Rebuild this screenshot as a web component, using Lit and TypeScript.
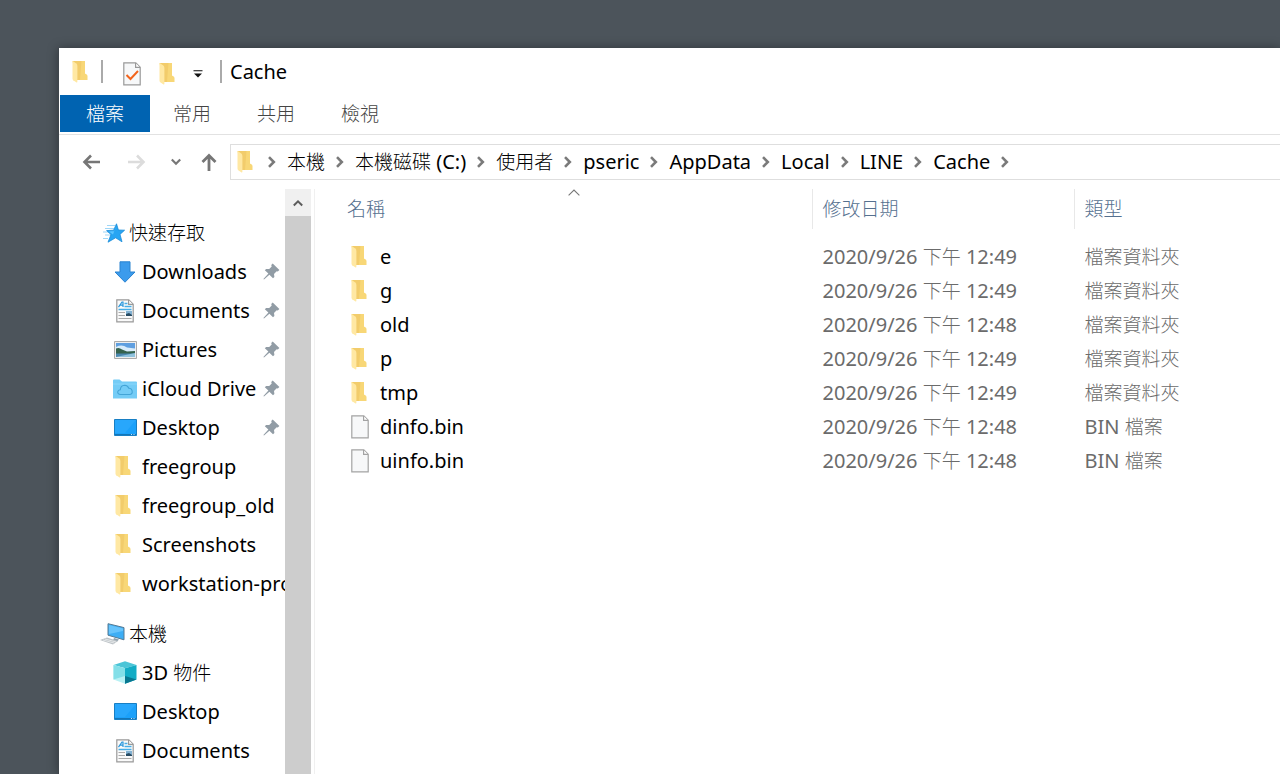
import { LitElement, html, svg, css, nothing, TemplateResult } from "lit";
import { customElement, property } from "lit/decorators.js";

type IconName =
  | "folder" | "file" | "check" | "star" | "download" | "document" | "picture"
  | "icloud" | "desktop" | "computer" | "cube" | "pin" | "back" | "forward"
  | "down" | "up" | "chevron" | "caret" | "scroll" | "sort";

interface Glyph { w: number; h: number; art: TemplateResult; }

const GLYPHS: Record<IconName, Glyph> = {
  folder: { w: 16, h: 22, art: svg`
    <path d="M.5 0H13V12Q13 12.8 13.8 13Q15.5 13.5 15.5 15V19H4Z" fill="#f8d777"/>
    <path d="M1 0L5 3V19H8L9.5 0Z" fill="#f2cc6b"/>
    <path d="M.5 0L4.2 2.6Q5.4 3.6 5.4 5V20.6Q5.4 22 4.2 21.2L1.2 19.2Q.5 18.6 .5 17.6Z" fill="#ffe8a3"/>` },
  file: { w: 18, h: 24, art: svg`
    <path d="M.8 .8H12.8L17.2 5.2V22.8H.8Z" fill="#f7f8f9" stroke="#a3a3a3" stroke-width="1.2"/>
    <path d="M12.6 1V5.4H17" fill="#fff" stroke="#a3a3a3" stroke-width="1.2"/>` },
  check: { w: 18, h: 24, art: svg`
    <path d="M.8 .8H12.8L17.2 5.2V22.8H.8Z" fill="#f7f8f9" stroke="#999" stroke-width="1.2"/>
    <path d="M12.6 1V5.4H17" fill="#fff" stroke="#999" stroke-width="1.2"/>
    <path d="M3.5 13L7.5 17L15 9" fill="none" stroke="#f2641c" stroke-width="2"/>` },
  star: { w: 22, h: 20, art: svg`
    <path d="M4 2.5H12M2 5.5H11M0 9H6M2 12H8M0 15.5H5" stroke="#9ed6f7" stroke-width="1.1"/>
    <path d="M13.5 .8L15.4 7L21.6 7.2L17 11.4L19 18.8L12.6 14.8L5 19.2L8 11.6L3.6 7.6L10.6 7.2Z" fill="#27a5f3" stroke="#1b8bd8" stroke-width=".8"/>
    <path d="M13.4 2.5L11.5 8L6 8.4L10 11.5Z" fill="#5cc4ff"/>` },
  download: { w: 22, h: 22, art: svg`
    <path d="M6 .8H16V11H21L11 21.2L1 11H6Z" fill="#3b9bec" stroke="#2b83d0"/>` },
  document: { w: 18, h: 24, art: svg`
    <path d="M.8 .8H12.8L17.2 5.2V22.8H.8Z" fill="#fafafa" stroke="#999" stroke-width="1.2"/>
    <path d="M12.6 1V5.4H17" fill="#fff" stroke="#999" stroke-width="1.2"/>
    <path d="M2.5 8.2L6 3H7V8M4.2 6.2H7" fill="none" stroke="#2795db" stroke-width="1.2"/>
    <path d="M8.5 4.5H11.5M8.5 7.5H15.5M2.5 10.5H15.5" stroke="#45aee8" stroke-width="1.3"/>
    <path d="M2.5 13.5H9M2.5 16.5H9M2.5 19.5H15.5" stroke="#aaa" stroke-width="1.2"/>
    <path d="M10 12H16V17H10Z" fill="#82b1d2"/><path d="M10 17V15L13 14L16 16V17Z" fill="#274b63"/>` },
  picture: { w: 23, h: 18, art: svg`
    <path d="M.5 .5H22.5V17.5H.5Z" fill="#eee" stroke="#aaa"/>
    <path d="M2 2H21V16H2Z" fill="#5f9fe0"/>
    <path d="M2 6Q8 3 13 6.5L21 7.5V11H2Z" fill="#d8ecfb"/>
    <path d="M2 7.5Q5 6 8 8.5L13 10.5L21 10V13H2Z" fill="#35624d"/>
    <path d="M2 12.5H21V16H2Z" fill="#4b87ae"/><path d="M2 16L21 12V16Z" fill="#8fc2dd"/>` },
  icloud: { w: 24, h: 20, art: svg`
    <path d="M0 1.5Q0 .5 1 .5H6.5L9 2.5H23Q24 2.5 24 3.5V19.5H0Z" fill="#74ccf6"/>
    <path d="M0 5H24" stroke="#8ad7fb"/>
    <path d="M7.5 15.5Q4.5 15.3 4.7 12.8Q5 10.8 7.3 10.7Q7.6 6.4 11.7 6.2Q14.8 6.3 15.8 9.2Q18.5 9 19 11.3Q20 15.3 17 15.5Z" fill="none" stroke="#43a4d6" stroke-width="1.1"/>` },
  desktop: { w: 23, h: 17, art: svg`
    <path d="M.5 .5H22.5V16.5H.5Z" fill="#1ba1fa" stroke="#187fc4"/>
    <path d="M1 14V1H22L11 14Z" fill="#36adfd" opacity=".5"/>
    <path d="M1 15.5H22" stroke="#1376b8"/><path d="M17 15.5H18M19.5 15.5H20.5" stroke="#bfe4ff"/>` },
  computer: { w: 25, h: 22, art: svg`
    <path d="M8 .7L24 4.6V16.8L8 12.2Z" fill="#3daef5" stroke="#587a92"/>
    <path d="M9 2L23 5.4V8L9 11Z" fill="#67c4fc"/>
    <path d="M14 15L19 16.5L17 18.5L13 17.5Z" fill="#8da0ad"/>
    <path d="M0 17L7 14.5L18 18L13 21.5Z" fill="#bcc2c6"/>
    <path d="M3 17L14 20M5 16L16 19" stroke="#eef0f1" stroke-width=".8"/>` },
  cube: { w: 24, h: 23, art: svg`
    <path d="M.5 4L12 .3L23.5 4L12 7.2Z" fill="#4bc5d7"/>
    <path d="M.5 4L12 7.2V22.8L.5 18.4Z" fill="#b8f1f4"/>
    <path d="M.5 4L12 7.2V15L.5 18.4Z" fill="#83dfe8"/>
    <path d="M23.5 4L12 7.2V22.8L23.5 18.4Z" fill="#12acc5"/>
    <path d="M12 15L23.5 18.4L12 22.8Z" fill="#087790"/>` },
  pin: { w: 17, h: 17, art: svg`
    <path d="M9.7 .5L16.4 7L14.8 8.6L13.7 8.2L11 11L11.4 14L10 15.3L6.4 11.7L1 16.6L.4 16L5.4 10.6L1.8 7.2L3.1 5.9L6.2 6.1L8.7 3.4L8.2 2Z" fill="#919ca5"/>` },
  back: { w: 18, h: 16, art: svg`<path d="M9 1.5L2.5 8L9 14.5M2.5 8H18" fill="none" stroke="#767676" stroke-width="2.6"/>` },
  forward: { w: 18, h: 16, art: svg`<path d="M9 1.5L15.5 8L9 14.5M15.5 8H0" fill="none" stroke="#dcdcdc" stroke-width="2.6"/>` },
  down: { w: 10, h: 8, art: svg`<path d="M.8 1.5L5 5.7L9.2 1.5" fill="none" stroke="#777" stroke-width="2.2"/>` },
  up: { w: 16, h: 18, art: svg`<path d="M1.5 9L8 2.5L14.5 9M8 2.5V18" fill="none" stroke="#767676" stroke-width="2.8"/>` },
  chevron: { w: 8, h: 12, art: svg`<path d="M1 1.2L5.8 6L1 10.8" fill="none" stroke="#7a7a7a" stroke-width="2.6"/>` },
  caret: { w: 10, h: 8, art: svg`<path d="M.5 .7H9.5" stroke="#333" stroke-width="1.2"/><path d="M1 3.5H9L5 7.5Z" fill="#111"/>` },
  scroll: { w: 10, h: 8, art: svg`<path d="M.8 6.5L5 2.3L9.2 6.5" fill="none" stroke="#5c5c5c" stroke-width="2"/>` },
  sort: { w: 12, h: 7, art: svg`<path d="M.6 6.4L6 1L11.4 6.4" fill="none" stroke="#777" stroke-width="1.1"/>` },
};

const icon = (name: IconName) => {
  const g = GLYPHS[name];
  return html`<svg class="icon" width=${g.w} height=${g.h} viewBox="0 0 ${g.w} ${g.h}" aria-hidden="true">${g.art}</svg>`;
};

/** Sets runs of Han characters in their own lighter, slightly smaller style. */
const label = (text: string) =>
  text.split(/([\u4e00-\u9fff]+)/).filter(Boolean).map((run) =>
    /[\u4e00-\u9fff]/.test(run) ? html`<span class="han">${run}</span>` : run);

const base = css`
  * { box-sizing: border-box; }
  .icon { display: block; flex: none; }
  .han { font-size: 19px; font-weight: 300; }
  button {
    margin: 0; padding: 0; border: 0; background: none; color: inherit;
    font: inherit; display: flex; align-items: center; justify-content: center;
  }
  a { color: inherit; text-decoration: none; }
`;

interface Place { icon: IconName; name: string; pinned?: boolean; }
interface Group extends Place { items: Place[]; }

const GROUPS: Group[] = [
  { icon: "star", name: "快速存取", items: [
    { icon: "download", name: "Downloads", pinned: true },
    { icon: "document", name: "Documents", pinned: true },
    { icon: "picture", name: "Pictures", pinned: true },
    { icon: "icloud", name: "iCloud Drive", pinned: true },
    { icon: "desktop", name: "Desktop", pinned: true },
    { icon: "folder", name: "freegroup" },
    { icon: "folder", name: "freegroup_old" },
    { icon: "folder", name: "Screenshots" },
    { icon: "folder", name: "workstation-pro" },
  ] },
  { icon: "computer", name: "本機", items: [
    { icon: "cube", name: "3D 物件" },
    { icon: "desktop", name: "Desktop" },
    { icon: "document", name: "Documents" },
  ] },
];

@customElement("nav-pane")
class NavPane extends LitElement {
  static styles = [base, css`
    :host { display: flex; min-height: 0; border-right: 1px solid #f0f0f0; padding-right: 3px; }
    .tree { flex: 1; min-width: 0; overflow: hidden; padding-top: 24px; }
    .group { margin: 0 0 11px; padding: 0; list-style: none; }
    .row { display: flex; align-items: center; height: 39px; white-space: nowrap; }
    .head { padding-left: 41px; gap: 1px; }
    .item { padding-left: 54px; gap: 5px; }
    .slot { width: 28px; flex: none; display: flex; justify-content: center; }
    .head .computer { justify-content: flex-start; }
    .item .slot { width: 24px; }
    .item .folder { justify-content: flex-start; padding-left: 2px; }
    .name { flex: 1; min-width: 0; overflow: hidden; }
    .pin { padding-right: 5px; }
    .bar { width: 26px; flex: none; display: flex; flex-direction: column; background: #cdcdcd; }
    .step { height: 27px; background: #f0f0f0; }
  `];

  private place(p: Place, kind: string) {
    return html`<a class="row ${kind}" href="#">
      <span class="slot ${p.icon}">${icon(p.icon)}</span>
      <span class="name">${label(p.name)}</span>
      ${p.pinned ? html`<span class="pin">${icon("pin")}</span>` : nothing}
    </a>`;
  }

  render() {
    return html`
      <nav class="tree" aria-label="導覽">
        ${GROUPS.map((g) => html`<ul class="group">
          <li>${this.place(g, "head")}</li>
          ${g.items.map((p) => html`<li>${this.place(p, "item")}</li>`)}
        </ul>`)}
      </nav>
      <div class="bar"><button class="step" aria-label="向上捲動">${icon("scroll")}</button></div>`;
  }
}

interface Entry { icon: IconName; name: string; date: string; kind: string; }

const ENTRIES: Entry[] = [
  { icon: "folder", name: "e", date: "2020/9/26 下午 12:49", kind: "檔案資料夾" },
  { icon: "folder", name: "g", date: "2020/9/26 下午 12:49", kind: "檔案資料夾" },
  { icon: "folder", name: "old", date: "2020/9/26 下午 12:48", kind: "檔案資料夾" },
  { icon: "folder", name: "p", date: "2020/9/26 下午 12:49", kind: "檔案資料夾" },
  { icon: "folder", name: "tmp", date: "2020/9/26 下午 12:49", kind: "檔案資料夾" },
  { icon: "file", name: "dinfo.bin", date: "2020/9/26 下午 12:48", kind: "BIN 檔案" },
  { icon: "file", name: "uinfo.bin", date: "2020/9/26 下午 12:48", kind: "BIN 檔案" },
];

@customElement("file-list")
class FileList extends LitElement {
  @property({ attribute: false }) entries: Entry[] = ENTRIES;

  static styles = [base, css`
    :host { display: block; min-width: 0; overflow: hidden; }
    .files { width: 100%; border-collapse: collapse; table-layout: fixed; }
    .c-name { width: 497px; }
    .c-date { width: 262px; }
    th { height: 40px; padding: 0 0 0 10px; text-align: left; font-weight: 400; color: #55708f; border-left: 1px solid #e8e8e8; position: relative; }
    th:first-child { padding-left: 32px; border-left: 0; }
    .sort { position: absolute; left: 50%; top: 0; margin-left: 5px; }
    .gap td { height: 11px; }
    td { height: 34px; padding: 0 0 0 10px; color: #6b6b6b; white-space: nowrap; border-left: 1px solid transparent; }
    td:first-child { padding-left: 35px; border-left: 0; color: #000; }
    .entry { display: flex; align-items: center; }
    .slot { width: 30px; flex: none; padding-left: 1px; }
  `];

  render() {
    return html`<table class="files">
      <colgroup><col class="c-name"><col class="c-date"><col></colgroup>
      <thead><tr>
        <th scope="col">${label("名稱")}<span class="sort">${icon("sort")}</span></th>
        <th scope="col">${label("修改日期")}</th>
        <th scope="col">${label("類型")}</th>
      </tr></thead>
      <tbody>
        <tr class="gap" aria-hidden="true"><td colspan="3"></td></tr>
        ${this.entries.map((e) => html`<tr>
          <td><div class="entry"><span class="slot">${icon(e.icon)}</span><span>${label(e.name)}</span></div></td>
          <td>${label(e.date)}</td>
          <td>${label(e.kind)}</td>
        </tr>`)}
      </tbody>
    </table>`;
  }
}

const TABS = ["檔案", "常用", "共用", "檢視"];
const PATH = ["本機", "本機磁碟 (C:)", "使用者", "pseric", "AppData", "Local", "LINE", "Cache"];

@customElement("app-root")
class AppRoot extends LitElement {
  static styles = [base, css`
    :host {
      display: flex; height: 100vh; overflow: hidden; padding: 48px 0 0 58px;
      box-sizing: border-box; background: #4c545b; color: #000;
      font: 20px/28px "Noto Sans", "Noto Sans CJK TC", sans-serif;
    }
    .window {
      flex: 1; min-width: 0; display: flex; flex-direction: column; background: #fff;
      border-left: 1px solid #3f464c; box-shadow: 0 0 10px rgba(0, 0, 0, .35);
    }
    .title { display: flex; align-items: center; height: 47px; padding-left: 13px; }
    .rule { width: 2px; height: 23px; background: #aaa; flex: none; }
    .quick { display: flex; align-items: center; gap: 18px; padding: 4px 17px 0 20px; }
    .title .rule:first-of-type { margin-left: 13px; }
    .title h1 { margin: 0 0 0 8px; font: inherit; }
    .tabs { display: flex; height: 40px; padding-left: 1px; border-bottom: 1px solid #e2e2e2; }
    .tab { height: 37px; padding: 0 23px; color: #444; }
    .tab.file { padding: 0 26px; background: #0063b1; color: #fff; }
    .address { display: flex; align-items: center; height: 54px; }
    .tools { display: flex; align-items: center; padding: 0 13px 0 23px; }
    .tools .fwd { margin-left: 28px; }
    .tools .recent { margin-left: 25px; }
    .tools .parent { margin-left: 20px; }
    .crumbs {
      flex: 1; min-width: 0; display: flex; align-items: center; gap: 11px; height: 36px;
      padding-left: 6px; border: 1px solid #dedede; border-right: 0; white-space: nowrap;
    }
    .crumbs .first { margin-right: 4px; }
    .crumbs a { padding-bottom: 1px; }
    .main { flex: 1; min-height: 0; display: grid; grid-template-columns: 256px minmax(0, 1fr); }
  `];

  render() {
    return html`<div class="window">
      <header class="title">
        ${icon("folder")}<div class="rule"></div>
        <div class="quick">
          <button aria-label="內容">${icon("check")}</button>
          <button aria-label="新增資料夾">${icon("folder")}</button>
          <button aria-label="自訂">${icon("caret")}</button>
        </div>
        <div class="rule"></div>
        <h1>Cache</h1>
      </header>
      <div class="tabs" role="tablist">
        ${TABS.map((t, i) => html`<button class="tab ${i ? "" : "file"}" role="tab">${label(t)}</button>`)}
      </div>
      <div class="address">
        <div class="tools">
          <button class="prev" aria-label="上一頁">${icon("back")}</button>
          <button class="fwd" aria-label="下一頁">${icon("forward")}</button>
          <button class="recent" aria-label="最近">${icon("down")}</button>
          <button class="parent" aria-label="上層">${icon("up")}</button>
        </div>
        <nav class="crumbs" aria-label="路徑">
          <span class="first">${icon("folder")}</span>${icon("chevron")}
          ${PATH.map((p) => html`<a href="#">${label(p)}</a>${icon("chevron")}`)}
        </nav>
      </div>
      <div class="main"><nav-pane></nav-pane><file-list></file-list></div>
    </div>`;
  }
}
